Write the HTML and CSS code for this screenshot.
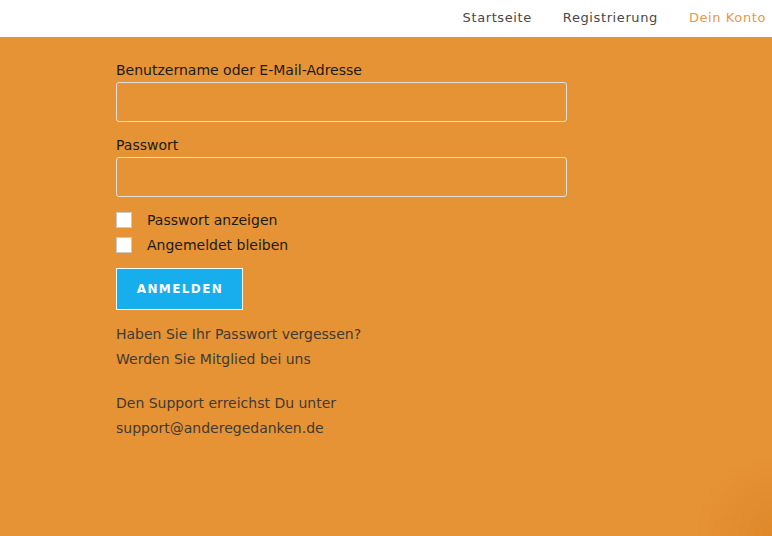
FILE: index.html
```html
<!DOCTYPE html>
<html lang="de">
<head>
<meta charset="utf-8">
<title>Anmelden</title>
<link rel="stylesheet" href="styles.css">
</head>
<body>
<header class="topbar">
  <nav class="nav">
    <a class="nav-link" href="#">Startseite</a>
    <a class="nav-link" href="#">Registrierung</a>
    <a class="nav-link active" href="#">Dein Konto</a>
  </nav>
</header>
<main class="page">
  <form class="login">
    <label class="field-label" for="user">Benutzername oder E-Mail-Adresse</label>
    <input class="field-input" id="user" type="text">
    <label class="field-label second" for="pass">Passwort</label>
    <input class="field-input" id="pass" type="password">
    <div class="checks">
      <label class="check"><span class="box"></span>Passwort anzeigen</label>
      <label class="check"><span class="box"></span>Angemeldet bleiben</label>
    </div>
    <button class="submit" type="button">ANMELDEN</button>
  </form>
  <div class="links">
    <a href="#">Haben Sie Ihr Passwort vergessen?</a>
    <a href="#">Werden Sie Mitglied bei uns</a>
  </div>
  <div class="support">
    <p>Den Support erreichst Du unter</p>
    <p>support@anderegedanken.de</p>
  </div>
</main>
</body>
</html>
```
FILE: styles.css
```css
html, body {
  margin: 0;
  height: 100%;
}
body {
  font-family: "DejaVu Sans", Verdana, sans-serif;
  background: radial-gradient(circle at 100% 100%, #de8829 0, #e69336 80px) #e69336;
  display: flex;
  flex-direction: column;
}
.topbar {
  background: #ffffff;
  height: 37px;
  display: flex;
  justify-content: flex-end;
  align-items: center;
}
.nav {
  display: flex;
  gap: 31px;
  padding-right: 6px;
  padding-bottom: 3px;
}
.nav-link {
  font-size: 13px;
  color: #484848;
  text-decoration: none;
  letter-spacing: 0.6px;
}
.nav-link.active {
  color: #e69a48;
}
.page {
  flex: 1;
  padding: 23px 0 0 116px;
}
.login {
  display: flex;
  flex-direction: column;
  align-items: flex-start;
  width: 451px;
}
.field-label {
  font-size: 14px;
  line-height: 20px;
  color: #1a1a1a;
  margin-bottom: 2px;
}
.field-label.second {
  margin-top: 13px;
}
.field-input {
  box-sizing: border-box;
  width: 451px;
  height: 40px;
  border: 1px solid #e4e0da;
  border-radius: 3px;
  background: transparent;
  margin: 0;
}
.checks {
  margin-top: 10px;
  display: flex;
  flex-direction: column;
}
.check {
  display: flex;
  align-items: center;
  gap: 15px;
  height: 25px;
  font-size: 14px;
  color: #1a1a1a;
}
.box {
  box-sizing: border-box;
  width: 16px;
  height: 16px;
  background: #ffffff;
  border: 1px solid #c8c8c8;
}
.submit {
  margin-top: 11px;
  box-sizing: border-box;
  width: 127px;
  height: 42px;
  background: #17aeee;
  border: 1px solid #ffffff;
  color: #ffffff;
  font-family: "DejaVu Sans", Verdana, sans-serif;
  font-weight: bold;
  font-size: 12px;
  letter-spacing: 1.4px;
  padding: 0 0 0 1px;
}
.links {
  margin-top: 12px;
  display: flex;
  flex-direction: column;
}
.links a, .support p {
  font-size: 14px;
  line-height: 25px;
  color: #3f3a33;
  text-decoration: none;
  margin: 0;
}
.support {
  margin-top: 19px;
}
```
